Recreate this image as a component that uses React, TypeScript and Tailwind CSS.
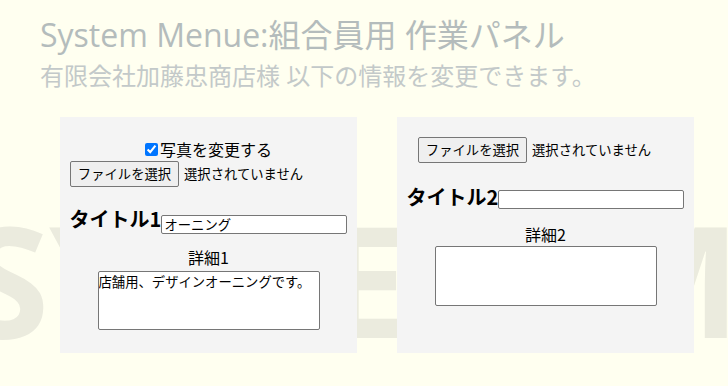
import React from "react";

function FileRow({ className = "" }: { className?: string }) {
  return (
    <div className={`flex h-[26px] items-center ${className}`}>
      <button
        type="button"
        className="flex h-[26px] w-[109px] items-center justify-center rounded-[2px] border border-[#767676] bg-[#efefef] text-[13.33px] leading-none text-black"
      >
        ファイルを選択
      </button>
      <span className="ml-[5px] text-[13.33px] leading-none text-black">選択されていません</span>
    </div>
  );
}

export default function App() {
  return (
    <div className="relative min-h-[386px] w-full overflow-hidden bg-[#fffff0] font-['Noto_Sans_CJK_JP',sans-serif] text-black">
      <div
        aria-hidden="true"
        className="pointer-events-none absolute left-[-36px] top-[200px] select-none whitespace-nowrap font-['Open_Sans',sans-serif] text-[155px] font-bold leading-none text-[#ebebde]"
      >
        SYSTEM MENUE
      </div>

      <div className="relative pl-10 pt-[15px] font-['Open_Sans','Noto_Sans_CJK_JP',sans-serif]">
        <h1 className="text-[32px] leading-[40px] text-[#b4bcbc]">System Menue:組合員用 作業パネル</h1>
        <p className="mt-[5px] text-[24px] leading-[32px] text-[#c3c9c9]">
          有限会社加藤忠商店様 以下の情報を変更できます。
        </p>
      </div>

      <div className="relative mt-[25px] flex gap-10 pl-[60px]">
        <div className="flex h-[236px] w-[297px] flex-col bg-[#f4f4f4] pt-5">
          <div className="flex h-6 items-center justify-center text-[16px] leading-6">
            <input type="checkbox" defaultChecked className="m-0 mr-[2px] h-[13px] w-[13px] accent-[#0075ff]" />
            <span>写真を変更する</span>
          </div>
          <FileRow className="ml-[10px]" />
          <div className="mt-[28px] flex h-[19px] items-start justify-center">
            <span className="-mt-[6px] text-[20px] font-bold leading-[20px]">タイトル1</span>
            <input
              type="text"
              defaultValue="オーニング"
              className="h-[19px] w-[186px] rounded-[2px] border border-[#767676] bg-white px-[2px] text-[13.33px] leading-none text-black outline-none"
            />
          </div>
          <div className="mt-[11px] text-center text-[16px] leading-6">詳細1</div>
          <textarea
            defaultValue="店舗用、デザインオーニングです。"
            className="mx-auto mt-[2px] h-[59px] w-[222px] resize-none rounded-[2px] border border-[#767676] bg-white px-0 py-[1px] text-[13.33px] leading-[18px] text-black outline-none"
          />
        </div>

        <div className="flex h-[236px] w-[297px] flex-col bg-[#f4f4f4] pt-5">
          <FileRow className="ml-[21px]" />
          <div className="mt-[27px] flex h-[19px] items-start justify-center">
            <span className="-mt-[3px] text-[20px] font-bold leading-[20px]">タイトル2</span>
            <input
              type="text"
              defaultValue=""
              className="h-[19px] w-[186px] rounded-[2px] border border-[#767676] bg-white px-[2px] text-[13.33px] leading-none text-black outline-none"
            />
          </div>
          <div className="mt-[13px] text-center text-[16px] leading-6">詳細2</div>
          <textarea
            defaultValue=""
            className="mx-auto h-[60px] w-[222px] resize-none rounded-[2px] border border-[#767676] bg-white px-0 py-[1px] text-[13.33px] leading-[18px] text-black outline-none"
          />
        </div>
      </div>
    </div>
  );
}
